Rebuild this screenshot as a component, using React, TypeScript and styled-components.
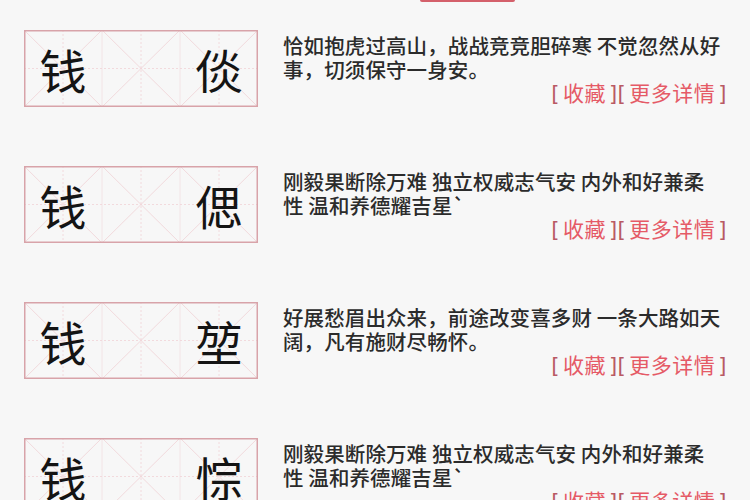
import * as React from 'react'
import styled, { createGlobalStyle } from 'styled-components'

// Page-wide reset and font
const GlobalStyle = createGlobalStyle`
    html, body {
        margin: 0;
        padding: 0;
        background: #f7f7f7;
    }
    body {
        font-family: "Noto Sans CJK SC", "Noto Sans", sans-serif;
        color: #2a2a2a;
    }
`

type NameItem = {
    id: string
    surname: string
    given: string
    poem: string
}

const names: NameItem[] = [
    {
        id: 'n1',
        surname: '钱',
        given: '倓',
        poem: '恰如抱虎过高山，战战竞竞胆碎寒 不觉忽然从好\n事，切须保守一身安。',
    },
    {
        id: 'n2',
        surname: '钱',
        given: '偲',
        poem: '刚毅果断除万难 独立权威志气安 内外和好兼柔\n性 温和养德耀吉星`',
    },
    {
        id: 'n3',
        surname: '钱',
        given: '堃',
        poem: '好展愁眉出众来，前途改变喜多财 一条大路如天\n阔，凡有施财尽畅怀。',
    },
    {
        id: 'n4',
        surname: '钱',
        given: '悰',
        poem: '刚毅果断除万难 独立权威志气安 内外和好兼柔\n性 温和养德耀吉星`',
    },
]

const Page = styled.div`
    width: 750px;
    height: 500px;
    overflow: hidden;
`

const TopStrip = styled.div`
    display: flex;
    padding-left: 420px;
    height: 2px;
`

const ActiveMark = styled.div`
    width: 95px;
    height: 2px;
    background: #d4606b;
    border-radius: 0 0 2px 2px;
`

const List = styled.div`
    display: flex;
    flex-direction: column;
    gap: 59px;
    padding: 28px 0 0 24px;
`

const Row = styled.div`
    display: flex;
    gap: 25px;
    height: 77px;
`

// Character practice box with the grid drawn behind
const NameBox = styled.div`
    position: relative;
    flex: 0 0 auto;
    width: 234px;
    height: 77px;
    display: grid;
    grid-template-columns: repeat(3, 1fr);
    align-items: center;
`

const GridLines = styled.svg`
    position: absolute;
    inset: 0;
    width: 100%;
    height: 100%;
`

const Char = styled.span<{ col: number }>`
    position: relative;
    grid-column: ${props => props.col};
    text-align: center;
    font-size: 47px;
    line-height: 77px;
    color: #141414;
`

const TextCol = styled.div`
    display: flex;
    flex-direction: column;
    width: 444px;
    padding-top: 3px;
`

const Poem = styled.div`
    font-size: 20.5px;
    line-height: 24px;
    white-space: pre-line;
    color: #2b2b2b;
    font-weight: 500;
    letter-spacing: 0.1px;
`

const Links = styled.div`
    align-self: flex-end;
    font-size: 21px;
    line-height: 22px;
    color: #e55a66;
    letter-spacing: 0.5px;
    white-space: nowrap;
`

const Bracket = styled.span<{ side: 'open' | 'close' }>`
    color: #b95a64;
    font-family: "DejaVu Sans", sans-serif;
    padding: ${props => (props.side === 'open' ? '0 3px 0 0' : '0 0 0 3px')};
`

const BoxGrid: React.FC = () => {
    const w = 234
    const h = 77
    const s = w / 3
    const mid = h / 2
    const light = '#f0d6d9'
    return (
        <GridLines viewBox={`0 0 ${w} ${h}`} preserveAspectRatio="none">
            {[0, 1, 2].map(i => (
                <g key={i} stroke={light} strokeWidth="0.9" fill="none">
                    <line x1={i * s} y1={0} x2={(i + 1) * s} y2={h} />
                    <line x1={(i + 1) * s} y1={0} x2={i * s} y2={h} />
                    <line x1={i * s + s / 2} y1={0} x2={i * s + s / 2} y2={h} strokeDasharray="2 2" />
                </g>
            ))}
            <line x1={s} y1={0} x2={s} y2={h} stroke="#f3e0e2" strokeWidth="0.8" />
            <line x1={2 * s} y1={0} x2={2 * s} y2={h} stroke="#f3e0e2" strokeWidth="0.8" />
            <line x1={0} y1={mid} x2={w} y2={mid} stroke={light} strokeWidth="0.9" strokeDasharray="2 2" />
            <rect x="0.75" y="0.75" width={w - 1.5} height={h - 1.5} fill="none" stroke="#d8a3a9" strokeWidth="1.5" />
        </GridLines>
    )
}

export default function App() {
    return (
        <Page>
            <GlobalStyle />
            <TopStrip>
                <ActiveMark />
            </TopStrip>
            <List>
                {names.map(item => (
                    <Row key={item.id}>
                        <NameBox>
                            <BoxGrid />
                            <Char col={1}>{item.surname}</Char>
                            <Char col={3}>{item.given}</Char>
                        </NameBox>
                        <TextCol>
                            <Poem>{item.poem}</Poem>
                            <Links>
                                <Bracket side="open">[</Bracket>收藏<Bracket side="close">]</Bracket>
                                <Bracket side="open">[</Bracket>更多详情<Bracket side="close">]</Bracket>
                            </Links>
                        </TextCol>
                    </Row>
                ))}
            </List>
        </Page>
    )
}
